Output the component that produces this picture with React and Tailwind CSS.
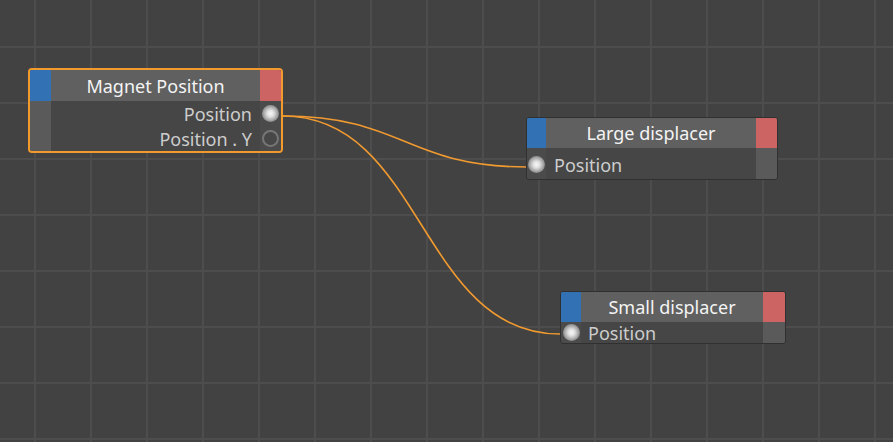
import React from "react";

function Port({ filled }) {
  if (filled) {
    return (
      <div className="w-[17px] h-[17px] rounded-full bg-[radial-gradient(circle,#f6f6f6_0%,#e2e2e2_26%,#b0b0b0_52%,#7a7a7a_78%,#5e5e5e_100%)]" />
    );
  }
  return <div className="w-[17px] h-[17px] rounded-full border-2 border-[#767676] bg-[#474747]" />;
}

export default function App() {
  const font = "font-['Noto_Sans','Open_Sans',sans-serif]";
  return (
    <div className={`relative w-[893px] h-[442px] overflow-hidden bg-[#424242] ${font}`}>
      <div className="absolute inset-0 bg-[linear-gradient(to_right,#4d4d4d_2px,transparent_2px),linear-gradient(to_bottom,#4d4d4d_2px,transparent_2px)] bg-[size:56px_56px] bg-[position:34px_46px]" />

      <svg className="absolute inset-0" width="893" height="442" viewBox="0 0 893 442" fill="none">
        <path d="M283 116 C403 116 407 167 527 167" stroke="#f09a30" strokeWidth="1.6" />
        <path d="M283 116 C423 116 420 334 560 334" stroke="#f09a30" strokeWidth="1.6" />
      </svg>

      {/* Magnet Position */}
      <div className="absolute left-[28px] top-[68px] w-[255px] h-[85px] rounded-[4px] border-2 border-[#f39a2c] bg-[#464646] overflow-hidden flex flex-col">
        <div className="flex h-[32px] bg-[#606060]">
          <div className="w-[21px] bg-[#3171b4]" />
          <div className="flex-1 flex items-center justify-center text-[18px] leading-[22px] text-[#f4f4f4]">Magnet Position</div>
          <div className="w-[21px] bg-[#cc6464]" />
        </div>
        <div className="flex flex-1">
          <div className="w-[21px] bg-[#5a5a5a]" />
          <div className="flex-1 flex flex-col text-[18px] leading-[22px] text-[#cdcdcd]">
            <div className="h-[25px] flex items-center justify-end pr-[8px] pt-[1px]">Position</div>
            <div className="h-[25px] flex items-center justify-end pr-[8px] pt-[1px]">Position . Y</div>
          </div>
          <div className="w-[21px] bg-[#4b4b4b] flex flex-col items-center">
            <div className="h-[25px] flex items-center"><Port filled /></div>
            <div className="h-[25px] flex items-center"><Port /></div>
          </div>
        </div>
      </div>

      {/* Large displacer */}
      <div className="absolute left-[526px] top-[117px] w-[252px] h-[63px] rounded-[3px] border border-[#303030] bg-[#464646] overflow-hidden flex flex-col">
        <div className="flex h-[30px] bg-[#606060]">
          <div className="w-[19px] bg-[#3171b4]" />
          <div className="flex-1 flex items-center justify-center text-[18px] leading-[22px] text-[#f4f4f4]">Large displacer</div>
          <div className="w-[21px] bg-[#cc6464]" />
        </div>
        <div className="flex flex-1">
          <div className="w-[19px] bg-[#4b4b4b] flex items-center justify-center pt-[1px]"><Port filled /></div>
          <div className="flex-1 flex items-center pl-[8px] pt-[3px] text-[18px] leading-[22px] text-[#cdcdcd]">Position</div>
          <div className="w-[21px] bg-[#5a5a5a]" />
        </div>
      </div>

      {/* Small displacer */}
      <div className="absolute left-[560px] top-[291px] w-[226px] h-[53px] rounded-[3px] border border-[#303030] bg-[#464646] overflow-hidden flex flex-col">
        <div className="flex h-[30px] bg-[#606060]">
          <div className="w-[20px] bg-[#3171b4]" />
          <div className="flex-1 flex items-center justify-center text-[18px] leading-[22px] text-[#f4f4f4]">Small displacer</div>
          <div className="w-[22px] bg-[#cc6464]" />
        </div>
        <div className="flex flex-1">
          <div className="w-[20px] bg-[#4b4b4b] flex items-center justify-center"><Port filled /></div>
          <div className="flex-1 flex items-center pl-[7px] pt-[1px] text-[18px] leading-[20px] text-[#cdcdcd]">Position</div>
          <div className="w-[22px] bg-[#5a5a5a]" />
        </div>
      </div>
    </div>
  );
}
